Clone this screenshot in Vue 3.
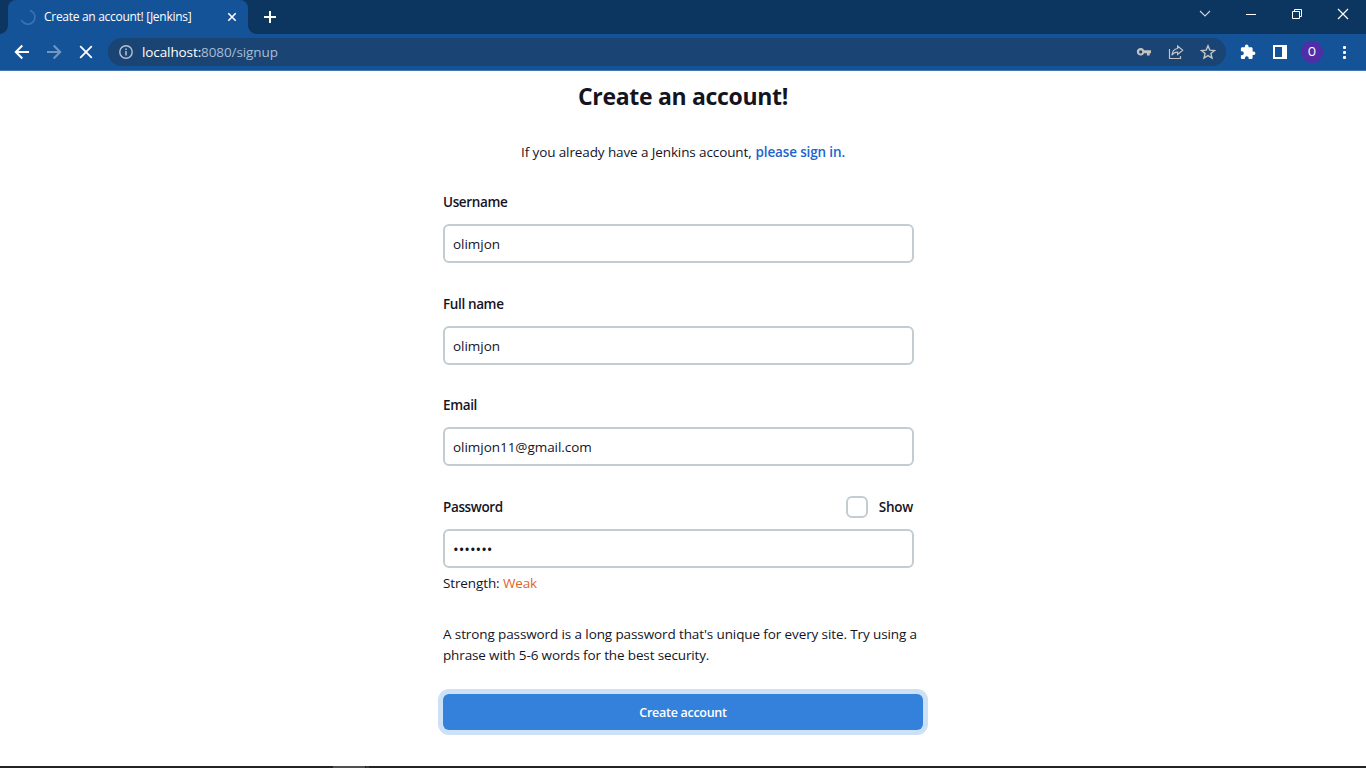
<script setup>
import { ref } from 'vue'

const fields = ref([
  { id: 'username', label: 'Username', value: 'olimjon', type: 'text' },
  { id: 'fullname', label: 'Full name', value: 'olimjon', type: 'text' },
  { id: 'email', label: 'Email', value: 'olimjon11@gmail.com', type: 'text' },
  { id: 'password', label: 'Password', value: 'olimjon', type: 'password' },
])
</script>

<template>
  <div class="window">
    <header class="tabstrip">
      <div class="tab">
        <svg class="spinner" width="16" height="16" viewBox="0 0 16 16"><path d="M10 1.5A7 7 0 1 1 1.5 11" fill="none" stroke="#3a72bb" stroke-width="1.6" /></svg>
        <span class="tab-title">Create an account! [Jenkins]</span>
        <svg class="tab-close" width="10" height="10" viewBox="0 0 10 10"><path d="M1.3 1.3l7.4 7.4M8.7 1.3L1.3 8.7" stroke="#fff" stroke-width="1.6" /></svg>
      </div>
      <svg class="newtab" width="14" height="14" viewBox="0 0 14 14"><path d="M7 1v12M1 7h12" stroke="#fff" stroke-width="2" /></svg>
      <div class="controls">
        <svg width="12" height="12" viewBox="0 0 12 12"><path d="M1 3l5 5 5-5" fill="none" stroke="#cdd7e2" stroke-width="1.1" /></svg>
        <svg width="12" height="12" viewBox="0 0 12 12"><path d="M1 6.5h10" stroke="#fff" /></svg>
        <svg width="12" height="12" viewBox="0 0 12 12"><path d="M1.5 3.5h7v7h-7zM3.5 3.5v-2h7v7h-2" fill="none" stroke="#fff" /></svg>
        <svg width="12" height="12" viewBox="0 0 12 12"><path d="M1 1l10 10M11 1L1 11" stroke="#fff" stroke-width="1.2" /></svg>
      </div>
    </header>

    <div class="toolbar">
      <nav class="nav">
        <svg width="16" height="16" viewBox="0 0 16 16"><path d="M15 8H2M8.3 1.5L1.8 8l6.5 6.5" fill="none" stroke="#fff" stroke-width="2" /></svg>
        <svg width="16" height="16" viewBox="0 0 16 16"><path d="M1 8h13M7.7 1.5L14.2 8l-6.5 6.5" fill="none" stroke="#7397c4" stroke-width="2" /></svg>
        <svg width="16" height="16" viewBox="0 0 16 16"><path d="M2.2 2.2l11.6 11.6M13.8 2.2L2.2 13.8" stroke="#fff" stroke-width="1.8" /></svg>
      </nav>
      <div class="omnibox">
        <svg class="info" width="14" height="14" viewBox="0 0 14 14"><circle cx="7" cy="7" r="6.2" fill="none" stroke="#b9c3cf" stroke-width="1.4" /><path d="M7 6v4.4M7 3.4v1.5" stroke="#b9c3cf" stroke-width="1.5" /></svg>
        <span class="url">localhost:<i>8080/signup</i></span>
        <div class="actions">
          <svg width="16" height="16" viewBox="0 0 16 16"><path fill="#c3c3c3" fill-rule="evenodd" d="M8.1 6.3H15v3h-1.3v2.2h-2.8V9.3H8.1A3.8 3.8 0 1 1 8.1 6.3zM4.7 6.3a1.6 1.6 0 1 0 0 3.2 1.6 1.6 0 0 0 0-3.2z" /></svg>
          <svg width="16" height="16" viewBox="0 0 16 16"><path d="M1.5 5v9.5h11V12M9.6 2l5.1 4.3-5.1 4.2V8.1C7 8 5.2 9 3.9 11.2 4.2 7.4 6.2 5 9.6 4.5z" fill="none" stroke="#bfc3c8" stroke-width="1.2" /></svg>
          <svg width="16" height="16" viewBox="0 0 16 16"><path d="M8 1.8l1.8 4.3 4.7.4-3.6 3 1.1 4.6L8 11.6l-4 2.5 1.1-4.6-3.6-3 4.7-.4z" fill="none" stroke="#c6c6c6" stroke-width="1.4" /></svg>
        </div>
      </div>
      <div class="extensions">
        <svg width="16" height="16" viewBox="0 0 16 16"><path fill="#fff" d="M13.6 7.4h-1V4.6c0-.8-.6-1.4-1.4-1.4H8.5V2.3a1.8 1.8 0 0 0-3.6 0v.9H2.3C1.5 3.2.9 3.8.9 4.6v2.6h.9a2 2 0 0 1 0 4H.9v2.5c0 .8.6 1.4 1.4 1.4h2.6v-1a1.9 1.9 0 0 1 3.8 0v1h2.5c.8 0 1.4-.6 1.4-1.4V11h1a1.8 1.8 0 0 0 0-3.6z" /></svg>
        <svg width="16" height="16" viewBox="0 0 16 16"><path fill="#fff" fill-rule="evenodd" d="M1 1h14v14H1zM3 3v10h7V3z" /></svg>
        <span class="avatar">O</span>
        <svg width="16" height="16" viewBox="0 0 16 16"><g fill="#fff"><rect x="7" y="2" width="3" height="3" rx="1" /><rect x="7" y="7" width="3" height="3" rx="1" /><rect x="7" y="12" width="3" height="3" rx="1" /></g></svg>
      </div>
    </div>

    <main class="page">
      <h1>Create an account!</h1>
      <p class="signin">If you already have a Jenkins account, <a>please sign in.</a></p>
      <form class="form">
        <div v-for="f in fields" :key="f.id" class="field">
          <div class="field-head">
            <label :for="f.id">{{ f.label }}</label>
            <span v-if="f.type === 'password'" class="show"><span class="box"></span><span class="show-text">Show</span></span>
          </div>
          <input :id="f.id" v-model="f.value" :type="f.type" />
        </div>
        <div class="strength">Strength: <span>Weak</span></div>
        <p class="hint">A strong password is a long password that's unique for every site. Try using a<br /><span class="line2">phrase with 5-6 words for the best security.</span></p>
        <button type="button">Create account</button>
      </form>
    </main>
    <footer class="taskbar"><span class="active"></span><span class="edge"></span></footer>
  </div>
</template>

<style>
body { margin: 0; overflow: hidden; background: #fff; }
</style>

<style scoped>
* { box-sizing: border-box; }
svg { display: block; flex: none; }
.window { width: 1366px; height: 768px; display: flex; flex-direction: column; overflow: hidden; background: #fff; font-family: "Open Sans", "Noto Sans", sans-serif; color: #14141f; }
.tabstrip { height: 34px; flex: none; background: #0c355f; display: flex; align-items: center; }
.tab { position: relative; width: 240px; height: 34px; margin-left: 8px; padding: 0 11px 0 12px; background: #155399; border-radius: 8px 8px 0 0; display: flex; align-items: center; }
.tab::before, .tab::after { content: ""; position: absolute; bottom: 0; width: 8px; height: 8px; }
.tab::before { left: -8px; background: radial-gradient(circle at 0 0, #0c355f 7.5px, #155399 8px); }
.tab::after { right: -8px; background: radial-gradient(circle at 100% 0, #0c355f 7.5px, #155399 8px); }
.tab-title { margin-left: 8px; color: #fff; font-size: 12px; line-height: 16px; padding-bottom: 1px; letter-spacing: -0.29px; white-space: nowrap; }
.tab-close { margin-left: auto; }
.newtab { margin-left: 15px; }
.controls { margin-left: auto; display: flex; gap: 34px; padding: 0 17px 6px 0; }
.toolbar { height: 37px; flex: none; background: #155399; border-bottom: 1px solid #4476b0; display: flex; align-items: center; }
.nav { display: flex; gap: 16px; margin-left: 14px; }
.omnibox { width: 1118px; height: 28px; margin-left: 14px; border-radius: 14px; background: #1a4473; display: flex; align-items: center; padding: 0 10px 0 11px; }
.url { margin-left: 9px; font-size: 13.5px; line-height: 18px; padding-bottom: 1px; letter-spacing: -0.1px; color: #fff; }
.url i { font-style: normal; color: #a9bdd4; }
.actions { margin-left: auto; display: flex; gap: 16px; }
.extensions { display: flex; align-items: center; gap: 16px; margin-left: 14px; }
.avatar { width: 22px; height: 22px; margin: 0 -3px; border-radius: 50%; background: #512da8; color: #fff; font: 12px/23px Roboto, sans-serif; text-align: center; }
.page { flex: 1; display: flex; flex-direction: column; align-items: center; font-size: 13.5px; line-height: 21px; }
h1 { margin: 0; height: 52px; line-height: 51px; font-size: 23px; font-weight: 700; letter-spacing: -0.32px; white-space: nowrap; }
p { margin: 0; }
.signin { margin-top: 19px; height: 21px; white-space: nowrap; letter-spacing: -0.11px; }
.signin a { color: #1d64ce; font-weight: 600; letter-spacing: -0.14px; margin-left: 0.5px; }
.form { width: 480px; margin-top: 29px; display: flex; flex-direction: column; }
.field { width: 471px; margin-bottom: 30.67px; }
.field:nth-child(4) { margin-bottom: 5px; }
.field-head { height: 21px; margin-bottom: 11px; display: flex; justify-content: space-between; align-items: center; font-weight: 600; letter-spacing: -0.37px; }
.show { display: flex; align-items: center; gap: 11px; margin-right: 1px; }
.box { width: 22px; height: 22px; border: 2px solid #c3cdd1; border-radius: 6px; }
.show-text { letter-spacing: -0.25px; }
input { display: block; width: 471px; height: 39px; padding: 1px 8px 0; border: 2px solid #c3cdd1; border-radius: 6px; background: #fff; outline: 0; font: 13.5px "Open Sans", sans-serif; letter-spacing: -0.04px; color: #14141f; }
input[type="password"] { padding: 2px 8px 0; font-size: 15px; letter-spacing: 0; }
.strength { height: 21px; letter-spacing: -0.12px; }
.strength span { color: #e0652a; }
.hint { margin-top: 30px; height: 42px; white-space: nowrap; letter-spacing: -0.11px; }
.line2 { letter-spacing: -0.14px; }
button { height: 36px; margin-top: 28px; padding: 1px 0 0; border: 0; border-radius: 6px; background: #3481dc; box-shadow: 0 0 0 5px #cce0f6; color: #fff; font: 600 12.5px "Open Sans", sans-serif; letter-spacing: -0.28px; }
.taskbar { height: 2px; flex: none; background: #232326; display: flex; }
.active { width: 32px; margin-left: 333px; background: #505053; }
.edge { width: 3px; margin-left: 1px; background: #3a3a3d; }
</style>
